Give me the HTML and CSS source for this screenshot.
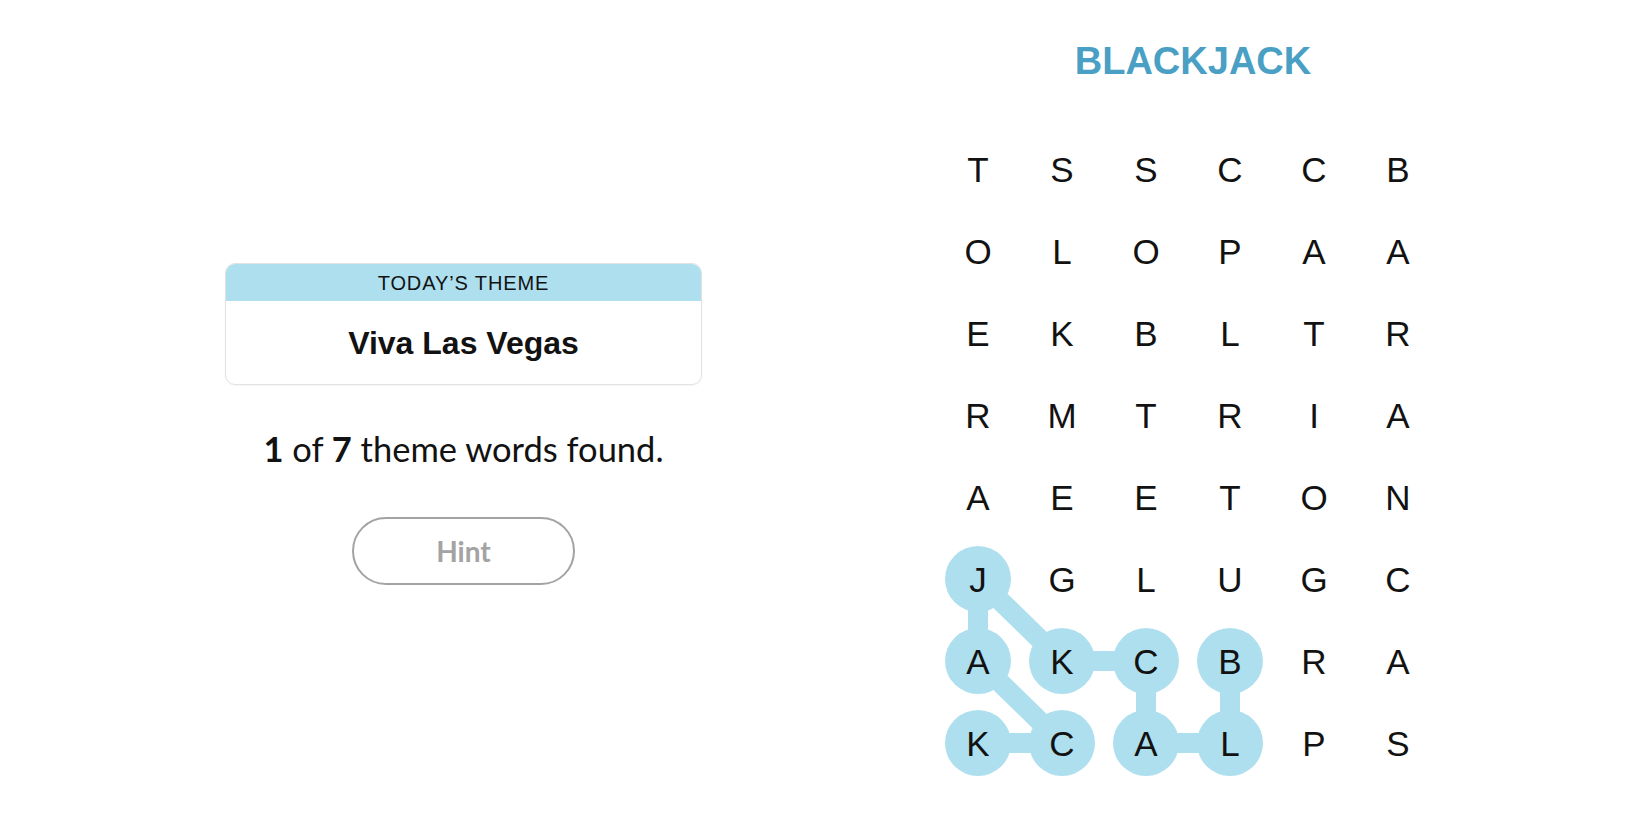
FILE: index.html
```html
<!DOCTYPE html>
<html lang="en">
<head>
<meta charset="utf-8">
<title>Strands</title>
<link rel="stylesheet" href="styles.css">
</head>
<body>
<main class="game">
  <section class="side">
    <div class="theme-card">
      <div class="theme-head">TODAY’S THEME</div>
      <div class="theme-body">Viva Las Vegas</div>
    </div>
    <p class="progress"><b>1</b> of <b>7</b> theme words found.</p>
    <button class="hint" type="button">Hint</button>
  </section>
  <section class="board">
    <h1 class="found-word">BLACKJACK</h1>
    <div class="grid-wrap">
      <svg class="paths" width="504" height="656" viewBox="0 0 504 656" aria-hidden="true">
        <g stroke="#aedfee" stroke-width="20" stroke-linecap="round" fill="none">
          <line x1="42" y1="451" x2="42" y2="533"/>
          <line x1="42" y1="451" x2="126" y2="533"/>
          <line x1="42" y1="533" x2="126" y2="615"/>
          <line x1="42" y1="615" x2="126" y2="615"/>
          <line x1="126" y1="533" x2="210" y2="533"/>
          <line x1="210" y1="533" x2="210" y2="615"/>
          <line x1="210" y1="615" x2="294" y2="615"/>
          <line x1="294" y1="615" x2="294" y2="533"/>
        </g>
        <g fill="#aedfee">
          <circle cx="42" cy="451" r="33"/>
          <circle cx="42" cy="533" r="33"/>
          <circle cx="126" cy="533" r="33"/>
          <circle cx="210" cy="533" r="33"/>
          <circle cx="294" cy="533" r="33"/>
          <circle cx="42" cy="615" r="33"/>
          <circle cx="126" cy="615" r="33"/>
          <circle cx="210" cy="615" r="33"/>
          <circle cx="294" cy="615" r="33"/>
        </g>
      </svg>
      <div class="grid">
        <span>T</span><span>S</span><span>S</span><span>C</span><span>C</span><span>B</span>
        <span>O</span><span>L</span><span>O</span><span>P</span><span>A</span><span>A</span>
        <span>E</span><span>K</span><span>B</span><span>L</span><span>T</span><span>R</span>
        <span>R</span><span>M</span><span>T</span><span>R</span><span>I</span><span>A</span>
        <span>A</span><span>E</span><span>E</span><span>T</span><span>O</span><span>N</span>
        <span>J</span><span>G</span><span>L</span><span>U</span><span>G</span><span>C</span>
        <span>A</span><span>K</span><span>C</span><span>B</span><span>R</span><span>A</span>
        <span>K</span><span>C</span><span>A</span><span>L</span><span>P</span><span>S</span>
      </div>
    </div>
  </section>
</main>
</body>
</html>
```

FILE: styles.css
```css
* {
  box-sizing: border-box;
}

html, body {
  margin: 0;
  padding: 0;
  background: #ffffff;
  color: #121212;
}

body {
  width: 1650px;
  height: 825px;
  overflow: hidden;
  font-family: "Liberation Sans", Arial, sans-serif;
}

.game {
  display: flex;
  align-items: flex-start;
  padding-left: 225px;
  gap: 234px;
}

.side {
  width: 477px;
  margin-top: 263px;
  display: flex;
  flex-direction: column;
  align-items: center;
}

.theme-card {
  width: 477px;
  height: 122px;
  border: 1px solid #e2e2e2;
  border-radius: 10px;
  overflow: hidden;
  display: flex;
  flex-direction: column;
  box-shadow: 0 1px 2px rgba(0, 0, 0, 0.04);
}

.theme-head {
  height: 37px;
  background: #aedfee;
  display: flex;
  align-items: center;
  justify-content: center;
  font-family: "Liberation Sans", Arial, sans-serif;
  font-size: 20px;
  letter-spacing: 0.9px;
  color: #121212;
  padding-top: 2px;
}

.theme-body {
  flex: 1;
  display: flex;
  align-items: center;
  justify-content: center;
  font-family: "Liberation Sans", Arial, sans-serif;
  font-weight: 700;
  font-size: 32px;
  color: #121212;
  padding-top: 1px;
}

.progress {
  margin: 43px 0 0;
  font-family: Lato, "Liberation Sans", sans-serif;
  font-size: 34.5px;
  line-height: 42px;
  color: #121212;
  white-space: nowrap;
}

.progress b {
  font-weight: 700;
}

.hint {
  margin-top: 47px;
  width: 223px;
  height: 68px;
  border: 2px solid #a3a3a3;
  border-radius: 34px;
  background: #ffffff;
  font-family: Lato, "Liberation Sans", sans-serif;
  font-weight: 700;
  font-size: 28px;
  color: #a3a3a3;
  padding: 0;
}

.board {
  width: 514px;
  display: flex;
  flex-direction: column;
}

.found-word {
  margin: 38px 0 0;
  text-align: center;
  font-family: "Liberation Sans", Arial, sans-serif;
  font-weight: 700;
  font-size: 38px;
  line-height: 46px;
  color: #4a9fc4;
}

.grid-wrap {
  position: relative;
  width: 504px;
  height: 656px;
  margin-top: 44px;
}

.paths {
  position: absolute;
  left: 0;
  top: 0;
}

.grid {
  position: relative;
  display: grid;
  grid-template-columns: repeat(6, 84px);
  grid-template-rows: repeat(8, 82px);
}

.grid span {
  display: flex;
  align-items: center;
  justify-content: center;
  font-family: "Liberation Sans", Arial, sans-serif;
  font-size: 35px;
  color: #121212;
  padding-top: 1px;
}
```
